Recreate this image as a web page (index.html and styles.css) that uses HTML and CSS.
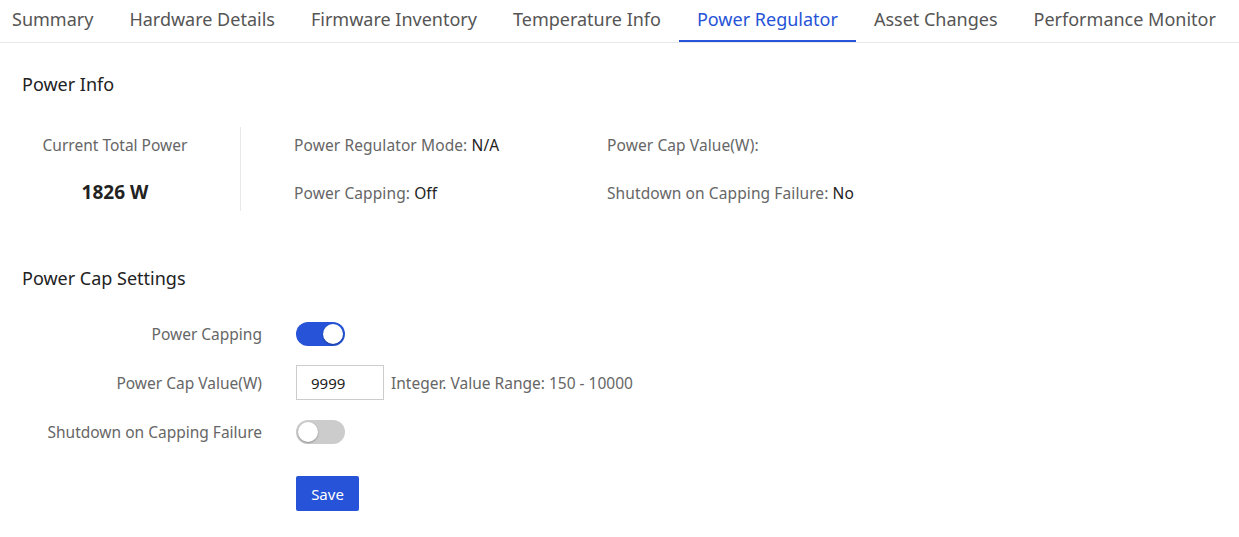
FILE: index.html
```html
<!DOCTYPE html>
<html lang="en">
<head>
    <meta charset="UTF-8">
    <title>Power Regulator</title>
    <link rel="stylesheet" href="styles.css">
</head>
<body>
    <!-- Tabs -->
    <div class="tabs">
        <a class="tab" href="#">Summary</a>
        <a class="tab" href="#">Hardware Details</a>
        <a class="tab" href="#">Firmware Inventory</a>
        <a class="tab" href="#">Temperature Info</a>
        <a class="tab active" href="#">Power Regulator</a>
        <a class="tab" href="#">Asset Changes</a>
        <a class="tab" href="#">Performance Monitor</a>
    </div>

    <div class="content">
        <h2 class="section-title">Power Info</h2>
        <div class="power-info">
            <div class="total">
                <div class="total-label">Current Total Power</div>
                <div class="total-value">1826 W</div>
            </div>
            <div class="info-grid">
                <div class="info-item">Power Regulator Mode: <span class="val">N/A</span></div>
                <div class="info-item">Power Cap Value(W): <span class="val"></span></div>
                <div class="info-item">Power Capping: <span class="val">Off</span></div>
                <div class="info-item">Shutdown on Capping Failure: <span class="val">No</span></div>
            </div>
        </div>

        <h2 class="section-title settings-title">Power Cap Settings</h2>
        <form class="settings">
            <div class="form-row">
                <label class="form-label">Power Capping</label>
                <span class="switch on"><span class="knob"></span></span>
            </div>
            <div class="form-row">
                <label class="form-label">Power Cap Value(W)</label>
                <input class="text-input" type="text" value="9999">
                <span class="hint">Integer. Value Range: 150 - 10000</span>
            </div>
            <div class="form-row">
                <label class="form-label">Shutdown on Capping Failure</label>
                <span class="switch"><span class="knob"></span></span>
            </div>
            <div class="form-row buttons">
                <span class="form-label"></span>
                <button type="button" class="btn">Save</button>
            </div>
        </form>
    </div>
</body>
</html>
```

FILE: styles.css
```css
/* Basic styling */
body {
    font-family: "Noto Sans", "Open Sans", sans-serif;
    margin: 0;
    padding: 0;
    background-color: #fff;
    color: #666;
}

/* Tabs */
.tabs {
    display: flex;
    border-bottom: 1px solid #e8e8e8;
    height: 43px;
    box-sizing: border-box;
}
.tab {
    padding: 0 18px;
    font-size: 18px;
    line-height: 38px;
    color: #555;
    text-decoration: none;
    border-bottom: 2px solid transparent;
    white-space: nowrap;
}
.tab:first-child {
    padding-left: 12px;
}
.tab.active {
    color: #2653d7;
    border-bottom-color: #2653d7;
}

.content {
    padding: 0 22px;
}
.section-title {
    margin: 0;
    padding-top: 29px;
    font-size: 18px;
    font-weight: normal;
    color: #222;
    line-height: 24px;
}
.settings-title {
    padding-top: 55px;
}

/* Power info */
.power-info {
    display: flex;
    margin-top: 31px;
}
.total {
    width: 186px;
    padding: 7px 32px 7px 0;
    border-right: 1px solid #e8e8e8;
    text-align: center;
}
.total-label {
    font-size: 15.5px;
    line-height: 22px;
    color: #666;
}
.total-value {
    font-size: 19px;
    font-weight: bold;
    color: #222;
    line-height: 24px;
    margin-top: 24px;
}
.info-grid {
    display: grid;
    grid-template-columns: 313px auto;
    row-gap: 19px;
    padding: 7px 0 0 53px;
}
.info-item {
    font-size: 15.5px;
    line-height: 22px;
    color: #666;
    letter-spacing: 0.1px;
}
.info-item .val {
    color: #222;
}

/* Settings form */
.settings {
    margin-top: 26px;
    display: flex;
    flex-direction: column;
    gap: 14px;
}
.form-row {
    display: flex;
    align-items: center;
    height: 35px;
}
.form-label {
    width: 240px;
    text-align: right;
    padding-right: 34px;
    font-size: 15.5px;
    color: #666;
    flex-shrink: 0;
}
.switch {
    position: relative;
    width: 49px;
    height: 24px;
    border-radius: 12px;
    background-color: #ccc;
    box-sizing: border-box;
}
.switch.on {
    background-color: #2653d7;
}
.switch .knob {
    position: absolute;
    top: 2px;
    left: 2px;
    width: 20px;
    height: 20px;
    border-radius: 50%;
    background-color: #fff;
    box-shadow: 0 1px 2px rgba(0, 0, 0, 0.3);
}
.switch.on .knob {
    left: 27px;
}
.text-input {
    width: 88px;
    height: 35px;
    box-sizing: border-box;
    border: 1px solid #ccc;
    padding: 0 14px;
    font-family: inherit;
    font-size: 15px;
    color: #222;
    outline: none;
}
.hint {
    margin-left: 7px;
    font-size: 15.5px;
    color: #666;
}
.buttons {
    margin-top: 13px;
}
.btn {
    width: 63px;
    height: 35px;
    background-color: #2653d7;
    color: #fff;
    border: none;
    border-radius: 2px;
    font-family: inherit;
    font-size: 15px;
    cursor: pointer;
}
```
